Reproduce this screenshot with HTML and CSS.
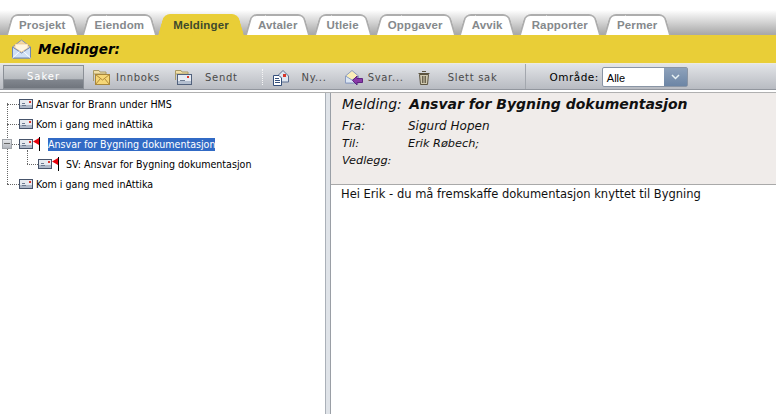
FILE: index.html
```html
<!DOCTYPE html>
<html>
<head>
    <title>Meldinger</title>
    <link rel="stylesheet" href="styles.css">
</head>
<body>
    <svg class="defs" width="0" height="0">
        <symbol id="mail" viewBox="0 0 14 10">
            <rect x="0.5" y="0.5" width="13" height="9" fill="#e6eaf0" stroke="#46536a"/>
            <rect x="1" y="6" width="12" height="3" fill="#aeb8c8"/>
            <path d="M3 6.500H7M3 4.500H6" stroke="#6c7a90" fill="none"/>
            <rect x="10" y="2" width="2" height="2" fill="#d8352a"/>
        </symbol>
        <symbol id="flag" viewBox="0 0 8 14">
            <path d="M6 1L0 4.500L6 8Z" fill="#e8000c"/>
            <rect x="6" y="0" width="1" height="14" fill="#000"/>
        </symbol>
    </svg>

    <nav class="tabbar">
        <a class="tab">Prosjekt</a>
        <a class="tab">Eiendom</a>
        <a class="tab active">Meldinger</a>
        <a class="tab">Avtaler</a>
        <a class="tab">Utleie</a>
        <a class="tab">Oppgaver</a>
        <a class="tab">Avvik</a>
        <a class="tab">Rapporter</a>
        <a class="tab">Permer</a>
    </nav>

    <header class="titlebar">
        <svg width="21" height="20" viewBox="0 0 21 20">
            <path d="M1.500 8L10.500 1L19.500 8V19H1.500Z" fill="#f3d9a8" stroke="#8494b5"/>
            <path d="M4 9V5H17V9L10.500 13Z" fill="#fff6e0" stroke="#e0b070" stroke-width="0.500"/>
            <path d="M1.500 8L10.500 14L19.500 8V19H1.500Z" fill="#cfe0f5" stroke="#6f86b5"/>
            <path d="M1.500 19L8.500 12.500M19.500 19L12.500 12.500" stroke="#fff" fill="none"/>
        </svg>
        <h1>Meldinger:</h1>
    </header>

    <div class="toolbar">
        <button class="saker">Saker</button>
        <a class="tool innboks">
            <svg width="17" height="17" viewBox="0 0 17 17">
                <path d="M0.500 12V1.500H6L7 3H13V5H0.500" fill="#f2dfa6" stroke="#a89a68"/>
                <rect x="2.500" y="5.500" width="14" height="10" fill="#f6d777" stroke="#a8863a"/>
                <path d="M2.500 5.500L9.500 11L16.500 5.500M2.500 15.500L7.500 9.500M16.500 15.500L11.500 9.500" fill="none" stroke="#b08a3a"/>
            </svg>
            Innboks
        </a>
        <a class="tool sendt">
            <svg width="17" height="17" viewBox="0 0 17 17">
                <path d="M0.500 11V1.500H6L7 3H13V5H0.500" fill="#f2dfa6" stroke="#a89a68"/>
                <rect x="2.500" y="5.500" width="14" height="10" fill="#e6ebf3" stroke="#51617c"/>
                <rect x="3" y="12" width="13" height="3" fill="#b4bfd0"/>
                <path d="M5 11.500H10" stroke="#6c7a90"/>
                <rect x="12" y="7" width="2" height="2" fill="#d8352a"/>
            </svg>
            Sendt
        </a>
        <span class="grip"></span>
        <a class="tool ny">
            <svg width="17" height="17" viewBox="0 0 17 17">
                <path d="M4.500 7L10 1.500L15.500 7V13H4.500Z" fill="#dfe6f0" stroke="#5d6f90"/>
                <rect x="10" y="5" width="3" height="3" fill="#d8352a"/>
                <path d="M0.500 6.500H6L8.500 9V16.500H0.500Z" fill="#fff" stroke="#35507c"/>
                <path d="M2 9.500H6M2 11.500H7M2 13.500H7" stroke="#35507c"/>
            </svg>
            Ny...
        </a>
        <a class="tool svar">
            <svg width="18" height="17" viewBox="0 0 18 17">
                <path d="M0.500 7L7 1.500L13.500 7V14H0.500Z" fill="#fbeeb8" stroke="#8c9cc0"/>
                <path d="M0.500 7L7 11L13.500 7V14H0.500Z" fill="#dbe6f5" stroke="#8c9cc0"/>
                <path d="M17.500 9.500H12V7L7.500 11.500L12 16V13.500H17.500Z" fill="#8a3aa8" stroke="#5f2480"/>
            </svg>
            Svar...
        </a>
        <a class="tool slett">
            <svg width="12" height="15" viewBox="0 0 12 15">
                <path d="M4 1.500H8M0.500 3.500H11.500" stroke="#5c5440" fill="none"/>
                <path d="M1.500 4.500H10.500L9.500 14.500H2.500Z" fill="#cfc8ae" stroke="#5c5440"/>
                <path d="M4.500 6V13M6 6V13M7.500 6V13" stroke="#6c6450"/>
            </svg>
            Slett sak
        </a>
        <span class="divider"></span>
        <label class="omrade">Område:</label>
        <div class="select">
            <span class="select-value">Alle</span>
            <span class="select-arrow">
                <svg width="9" height="6" viewBox="0 0 9 6"><path d="M1 1L4.500 4.500L8 1" fill="none" stroke="#e8f2f4" stroke-width="1.500"/></svg>
            </span>
        </div>
    </div>

    <main class="panes">
        <section class="tree-pane">
            <ul class="tree">
                <li class="node">
                    <span class="twig"></span>
                    <svg class="mail"><use href="#mail"/></svg>
                    <span class="label">Ansvar for Brann under HMS</span>
                </li>
                <li class="node">
                    <span class="twig"></span>
                    <svg class="mail"><use href="#mail"/></svg>
                    <span class="label">Kom i gang med inAttika</span>
                </li>
                <li class="node open">
                    <span class="twig"></span>
                    <span class="minus"></span>
                    <svg class="mail"><use href="#mail"/></svg>
                    <svg class="flag"><use href="#flag"/></svg>
                    <span class="label selected">Ansvar for Bygning dokumentasjon</span>
                </li>
                <li class="node child">
                    <span class="twig"></span>
                    <svg class="mail"><use href="#mail"/></svg>
                    <svg class="flag"><use href="#flag"/></svg>
                    <span class="label">SV: Ansvar for Bygning dokumentasjon</span>
                </li>
                <li class="node">
                    <span class="twig"></span>
                    <svg class="mail"><use href="#mail"/></svg>
                    <span class="label">Kom i gang med inAttika</span>
                </li>
            </ul>
        </section>
        <div class="splitter"></div>
        <section class="message">
            <div class="message-head">
                <h2><span class="caption">Melding:</span> <b>Ansvar for Bygning dokumentasjon</b></h2>
                <div class="meta from"><span>Fra:</span><span>Sigurd Hopen</span></div>
                <div class="meta"><span>Til:</span><span>Erik Røbech;</span></div>
                <div class="meta"><span>Vedlegg:</span><span></span></div>
            </div>
            <p class="message-body">Hei Erik - du må fremskaffe dokumentasjon knyttet til Bygning</p>
        </section>
    </main>
</body>
</html>
```

FILE: styles.css
```css
html, body {
    margin: 0;
    height: 414px;
    overflow: hidden;
    background: #fff;
    font-family: "DejaVu Sans", Verdana, sans-serif;
}
.defs {
    display: block;
    height: 0;
}

/* tabs */
.tabbar {
    display: flex;
    height: 35px;
    box-sizing: border-box;
    padding: 14px 0 0 6px;
    background: linear-gradient(#fff 0, #fff 10px, #a9a9a9 34px);
}
.tab {
    position: relative;
    z-index: 0;
    height: 21px;
    padding: 0 13px;
    margin-right: 3px;
    font: bold 11.500px/23px "Liberation Sans", Arial, sans-serif;
    letter-spacing: 0.150px;
    color: #85898c;
}
.tab::before, .tab::after {
    content: "";
    position: absolute;
    z-index: -1;
    top: 0;
    bottom: 0;
    width: 60%;
    box-sizing: border-box;
    background: #fff;
    border-top: 2px solid #adadad;
}
.tab::before {
    left: 0;
    border-left: 2px solid #adadad;
    border-top-left-radius: 6px;
    transform-origin: bottom left;
    transform: skewX(-16deg);
}
.tab::after {
    right: 0;
    border-right: 2px solid #adadad;
    border-top-right-radius: 6px;
    transform-origin: bottom right;
    transform: skewX(16deg);
}
.tab.active {
    color: #3f4a2c;
    padding: 0 15px;
    margin: 0 1px 0 -2px;
}
.tab.active::before, .tab.active::after {
    background: #e9ce37;
    border-color: #e9ce37;
}

/* yellow title */
.titlebar {
    display: flex;
    align-items: center;
    gap: 6px;
    height: 28px;
    padding-left: 11px;
    background: #e9ce37;
}
.titlebar h1 {
    margin: 0;
    font: italic bold 13.500px "DejaVu Sans", Verdana, sans-serif;
    color: #000;
}

/* toolbar */
.toolbar {
    display: flex;
    align-items: center;
    height: 27px;
    box-sizing: border-box;
    padding-left: 3px;
    border-top: 1px solid #eceae0;
    border-bottom: 1px solid #92969e;
    background: linear-gradient(#e2e4e7, #b8bbc2);
    font-size: 10px;
    letter-spacing: 0.700px;
    color: #4a4a4a;
}
.saker {
    width: 81px;
    height: 24px;
    padding: 0;
    border: 1px solid #8b9097;
    background: linear-gradient(#d4d7da 0, #b5b9be 60%, #82878f 62%, #70757d 100%);
    color: #fff;
    font: 10px "DejaVu Sans", Verdana, sans-serif;
    letter-spacing: 1px;
}
.tool {
    display: flex;
    align-items: center;
    padding-top: 1px;
}
.innboks {
    margin-left: 9px;
    gap: 6px;
}
.sendt {
    margin-left: 15px;
    gap: 13px;
}
.grip {
    height: 16px;
    margin: 0 10px 0 24px;
    border-left: 1px dotted #f4f4f4;
}
.ny {
    gap: 12px;
}
.svar {
    margin-left: 18px;
    gap: 5px;
}
.slett {
    margin-left: 14px;
    gap: 18px;
}
.divider {
    align-self: stretch;
    margin: 0 23px 0 28px;
    border-left: 1px solid #a3a7ae;
}
.omrade {
    color: #000;
    font-size: 10.500px;
    letter-spacing: 0.500px;
}
.select {
    display: flex;
    width: 86px;
    height: 20px;
    box-sizing: border-box;
    margin-left: 3px;
    border: 1px solid #8a95a5;
    border-radius: 2px;
    background: #fff;
    letter-spacing: 0;
}
.select-value {
    flex: 1;
    padding-left: 4px;
    font: 11px/20px "Liberation Sans", Arial, sans-serif;
    color: #000;
}
.select-arrow {
    display: flex;
    align-items: center;
    justify-content: center;
    width: 23px;
    background: linear-gradient(#8ea2bb, #6c85a5);
}

/* panes */
.panes {
    display: flex;
    height: 321px;
    margin-top: 2px;
    border-top: 1px solid #b0b0b0;
}
.tree-pane {
    width: 325px;
    flex: none;
}
.splitter {
    width: 4px;
    flex: none;
    background: #dfe3e8;
    border-left: 1px solid #aab0b8;
    border-right: 1px solid #9a9fa6;
}
.message {
    flex: 1;
}

/* tree */
.tree {
    position: relative;
    list-style: none;
    margin: 0;
    padding: 1px 0 0 7px;
    font: 10.600px "DejaVu Sans Condensed", "DejaVu Sans", sans-serif;
    font-stretch: condensed;
    color: #000;
}
.tree::before {
    content: "";
    position: absolute;
    left: 7px;
    top: 10px;
    height: 81px;
    border-left: 1px dotted #666;
}
.node {
    position: relative;
    display: flex;
    align-items: center;
    height: 20px;
}
.twig {
    width: 12px;
    height: 0;
    flex: none;
    border-top: 1px dotted #666;
}
.mail {
    width: 14px;
    height: 10px;
    flex: none;
}
.flag {
    width: 8px;
    height: 14px;
    flex: none;
    margin-top: -1px;
}
.label {
    margin-left: 3px;
    white-space: nowrap;
}
.minus {
    position: absolute;
    left: -5px;
    top: 5px;
    width: 10px;
    height: 10px;
    box-sizing: border-box;
    border: 1px solid #a0a4aa;
    background: linear-gradient(#e4e6e9, #b3b7bd);
}
.minus::after {
    content: "";
    position: absolute;
    left: 1px;
    right: 1px;
    top: 3px;
    height: 1px;
    background: #666;
}
.open .label {
    margin-left: 7px;
}
.selected {
    line-height: 13px;
    background: #316ac5;
    color: #fff;
}
.child {
    padding-left: 20px;
}
.child .twig {
    width: 11px;
}
.child::before {
    content: "";
    position: absolute;
    left: 20px;
    top: -4px;
    height: 14px;
    border-left: 1px dotted #666;
}
.child .label {
    margin-left: 6px;
}

/* message */
.message-head {
    height: 92px;
    box-sizing: border-box;
    padding: 3px 0 0 11px;
    background: #f0ecea;
    border-bottom: 1px solid #a9a9a9;
    font-style: italic;
    color: #111;
}
.message-head h2 {
    margin: 0 0 6px;
    font-size: 14px;
    font-weight: normal;
}
.message-head b {
    margin-left: 3px;
    font-weight: bold;
}
.meta {
    display: grid;
    grid-template-columns: 66px 1fr;
    height: 17px;
    font-size: 11.300px;
    line-height: 17px;
}
.from span {
    font-size: 12px;
}
.message-body {
    margin: 2px 0 0 10px;
    font-size: 11.500px;
    color: #111;
}
```
